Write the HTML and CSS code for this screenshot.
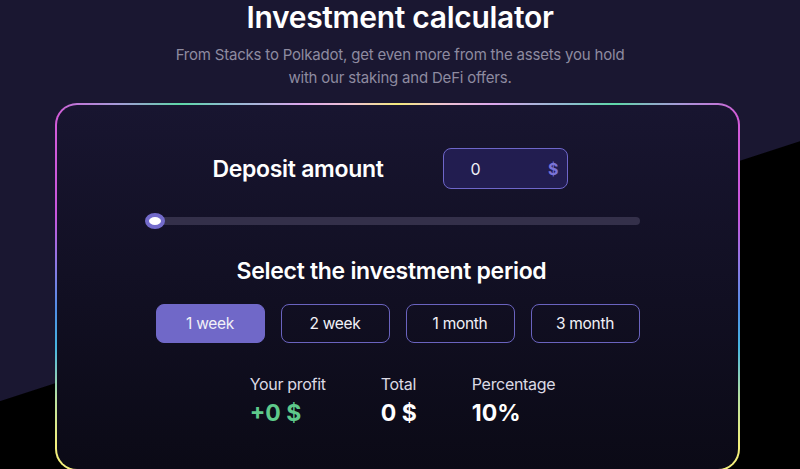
FILE: index.html
```html
<!DOCTYPE html>
<html lang="en">
<head>
<meta charset="utf-8">
<title>Investment calculator</title>
<link rel="stylesheet" href="styles.css">
</head>
<body>
<main class="page">
  <h1 class="title">Investment calculator</h1>
  <p class="subtitle">From Stacks to Polkadot, get even more from the assets you hold<br>with our staking and DeFi offers.</p>
  <section class="card">
    <div class="deposit-row">
      <span class="label-lg">Deposit amount</span>
      <div class="amount-box"><span class="amount-val">0</span><span class="amount-cur">$</span></div>
    </div>
    <div class="slider"><div class="track"></div><div class="thumb"></div></div>
    <h2 class="label-lg period-title">Select the investment period</h2>
    <div class="periods">
      <button class="period active">1 week</button>
      <button class="period">2 week</button>
      <button class="period">1 month</button>
      <button class="period">3 month</button>
    </div>
    <div class="stats">
      <div class="stat"><span class="stat-label">Your profit</span><span class="stat-val green">+0 $</span></div>
      <div class="stat"><span class="stat-label">Total</span><span class="stat-val">0 $</span></div>
      <div class="stat"><span class="stat-label">Percentage</span><span class="stat-val">10%</span></div>
    </div>
  </section>
</main>
</body>
</html>
```
FILE: styles.css
```css
html, body {
  margin: 0;
  height: 100%;
  overflow: hidden;
}
body {
  font-family: Inter, "Noto Sans", sans-serif;
  color: #fff;
  background: linear-gradient(162deg, #1a1731 381px, #000 382px);
}
.page {
  display: flex;
  flex-direction: column;
}
.title {
  margin: -2px 0 0;
  font-size: 30px;
  line-height: 38px;
  font-weight: 600;
  text-align: center;
  letter-spacing: -0.3px;
}
.subtitle {
  margin: 7px 0 0;
  font-size: 15px;
  line-height: 23px;
  color: #8e8ba0;
  text-align: center;
  letter-spacing: -0.2px;
}
.card {
  box-sizing: border-box;
  margin: 14px 0 0 55px;
  width: 685px;
  height: 368px;
  border: 2px solid transparent;
  border-radius: 22px;
  background:
    linear-gradient(180deg, #181530 0%, #0b0a16 100%) padding-box,
    conic-gradient(from 0deg at 50% 50%,
      #f3e97c 0deg, #efc4d2 14deg, #dba6ec 28deg, #8fbcd0 43deg, #5ed8a8 50deg,
      #a79ad8 57deg, #d35cd8 63deg, #c856dc 78deg, #8f78e4 86deg, #4f8fe6 94deg,
      #46b5e0 100deg, #b8e0a0 108deg, #f4f07c 115deg, #f4f07c 119deg, #7cc8d8 128deg,
      #4a98d0 145deg, #4a95d0 180deg,
      #4a98d0 215deg, #7cc8d8 232deg, #f4f07c 241deg, #f4f07c 245deg, #b8e0a0 252deg,
      #46b5e0 260deg, #4f8fe6 266deg, #8f78e4 274deg, #c856dc 282deg, #d35cd8 297deg,
      #a79ad8 303deg, #5ed8a8 310deg, #8fbcd0 317deg, #dba6ec 332deg, #efc4d2 346deg,
      #f3e97c 360deg) border-box;
  display: flex;
  flex-direction: column;
  align-items: center;
  padding-top: 43px;
}
.deposit-row {
  display: flex;
  align-items: center;
  gap: 59px;
  margin-left: -15px;
}
.label-lg {
  font-size: 23px;
  font-weight: 600;
  letter-spacing: -0.3px;
  margin: 0;
}
.amount-box {
  box-sizing: border-box;
  width: 125px;
  height: 41px;
  border: 1px solid #6e66c9;
  border-radius: 8px;
  background: #221d50;
  display: flex;
  align-items: center;
  justify-content: space-between;
  padding: 0 8px 0 27px;
}
.amount-val {
  font-size: 16px;
  color: #f0eff6;
}
.amount-cur {
  font-size: 16px;
  font-weight: 700;
  color: #7a73d8;
}
.slider {
  position: relative;
  width: 493px;
  height: 8px;
  margin-top: 28px;
  margin-left: -8px;
}
.track {
  height: 8px;
  border-radius: 4px;
  background: #34304a;
}
.thumb {
  position: absolute;
  left: -2px;
  top: -4px;
  box-sizing: border-box;
  width: 20px;
  height: 16px;
  border-radius: 50%;
  border: 4px solid #736bcb;
  background: #fff;
}
.period-title {
  font-size: 23px;
  margin-top: 32px;
  margin-left: -12px;
}
.periods {
  display: flex;
  gap: 16px;
  margin-top: 19px;
}
.period {
  box-sizing: border-box;
  width: 109px;
  height: 39px;
  border: 1px solid #6a63bf;
  border-radius: 8px;
  background: transparent;
  color: #f2f1f7;
  font-family: Inter, "Noto Sans", sans-serif;
  font-size: 15.5px;
  letter-spacing: -0.3px;
  padding: 0;
}
.period.active {
  background: #7068c8;
  border-color: #7068c8;
}
.stats {
  display: flex;
  gap: 55px;
  margin-top: 32px;
  margin-left: 10px;
}
.stat {
  display: flex;
  flex-direction: column;
  gap: 6px;
}
.stat-label {
  font-size: 16px;
  line-height: 18px;
  color: #dcdae4;
  letter-spacing: -0.3px;
}
.stat-val {
  font-size: 23px;
  line-height: 28px;
  font-weight: 700;
}
.green {
  color: #5ec98b;
}
```
